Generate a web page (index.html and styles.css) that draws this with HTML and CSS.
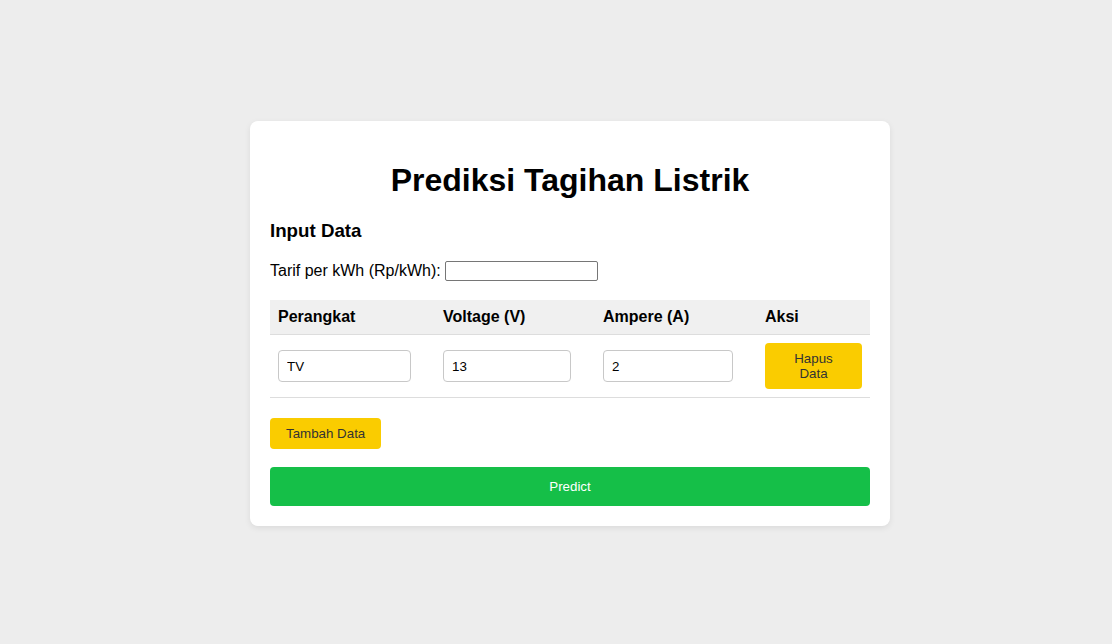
FILE: index.html
```html
<!DOCTYPE html>
<html>
<head>
<meta charset="utf-8">
<link rel="stylesheet" href="styles.css">
</head>
<body>
<div class="card">
  <h1 class="title">Prediksi Tagihan Listrik</h1>
  <h3 class="subtitle">Input Data</h3>
  <div class="tarif">
    <label>Tarif per kWh (Rp/kWh):</label>
    <input type="text" class="tarif-input">
  </div>
  <table class="data-table">
    <thead>
      <tr>
        <th class="c1">Perangkat</th>
        <th class="c2">Voltage (V)</th>
        <th class="c3">Ampere (A)</th>
        <th class="c4">Aksi</th>
      </tr>
    </thead>
    <tbody>
      <tr>
        <td><input type="text" class="cell-input w1" value="TV"></td>
        <td><input type="text" class="cell-input w2" value="13"></td>
        <td><input type="text" class="cell-input w3" value="2"></td>
        <td><button class="btn-yellow btn-hapus">Hapus Data</button></td>
      </tr>
    </tbody>
  </table>
  <div class="actions">
    <button class="btn-yellow btn-tambah">Tambah Data</button>
    <button class="btn-predict">Predict</button>
  </div>
</div>
</body>
</html>
```

FILE: styles.css
```css
html, body {
  margin: 0;
  padding: 0;
}
body {
  background: #ededed;
  font-family: "Liberation Sans", Arial, sans-serif;
  min-height: 644px;
  display: flex;
  align-items: flex-start;
  justify-content: flex-start;
  padding: 121px 0 0 250px;
  box-sizing: border-box;
}
.card {
  width: 600px;
  background: #fff;
  border-radius: 8px;
  padding: 20px;
  box-shadow: 0 2px 6px rgba(0,0,0,0.08);
}
.title {
  font-size: 32px;
  line-height: 37px;
  margin: 21px 0 21px;
  text-align: center;
  font-weight: bold;
  color: #000;
}
.subtitle {
  font-size: 18.72px;
  line-height: 22px;
  margin: 0 0 19px;
  font-weight: bold;
}
.tarif {
  font-size: 16px;
  line-height: 20px;
  display: flex;
  align-items: center;
  gap: 4px;
  height: 20px;
  margin-bottom: 19px;
}
.tarif-input {
  width: 153px;
  height: 20px;
  box-sizing: border-box;
  border: 1px solid #767676;
  border-radius: 2px;
  padding: 1px 2px;
  margin: 0;
  font-family: inherit;
}
.data-table {
  width: 600px;
  border-collapse: collapse;
  table-layout: fixed;
}
.data-table th {
  background: #f0f0f0;
  text-align: left;
  font-size: 16px;
  font-weight: bold;
  padding: 8px;
  line-height: 18px;
  border-bottom: 1px solid #dddddd;
}
.c1 { width: 149px; }
.c2 { width: 144px; }
.c3 { width: 146px; }
.c4 { width: 97px; }
.data-table td {
  padding: 8px;
  border-bottom: 1px solid #dddddd;
  vertical-align: middle;
}
.cell-input {
  display: block;
  height: 32px;
  box-sizing: border-box;
  border: 1px solid #c8c8c8;
  border-radius: 4px;
  padding: 7px 8px;
  font-size: 13.33px;
  font-family: inherit;
  color: #000;
  margin: 0;
}
.w1 { width: 133px; }
.w2 { width: 128px; }
.w3 { width: 130px; }
.btn-yellow {
  background: #facc00;
  color: #333;
  border: none;
  border-radius: 4px;
  padding: 8px 16px;
  font-size: 13.33px;
  line-height: 15px;
  font-family: inherit;
}
.btn-hapus {
  width: 97px;
  height: 46px;
  display: block;
}
.actions {
  display: flex;
  flex-direction: column;
  align-items: flex-start;
}
.btn-tambah {
  margin-top: 20px;
  height: 31px;
}
.btn-predict {
  margin-top: 18px;
  width: 600px;
  height: 39px;
  background: #15bf48;
  color: #fff;
  border: none;
  border-radius: 4px;
  font-size: 13.33px;
  font-family: inherit;
}
```
